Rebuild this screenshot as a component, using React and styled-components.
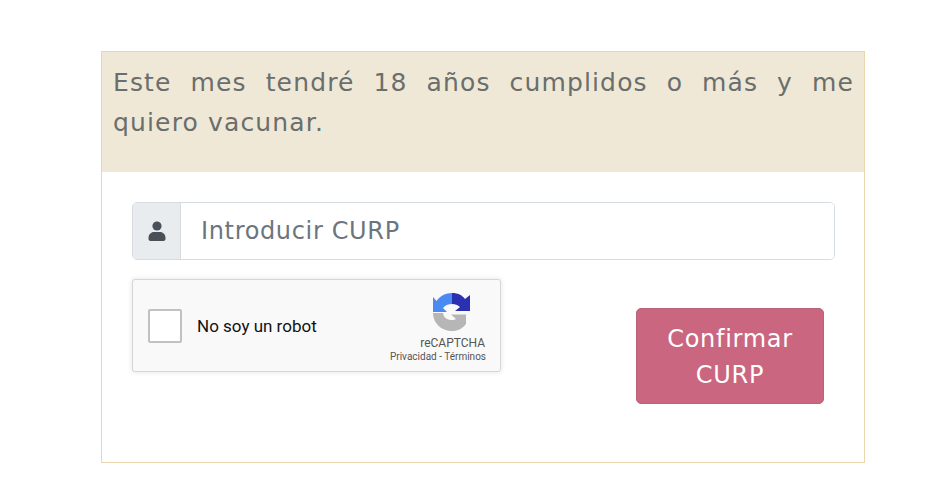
import styled, { createGlobalStyle } from "styled-components";

const GlobalStyle = createGlobalStyle`
  html, body {
    margin: 0;
    background: #fff;
  }
  body {
    font-family: "DejaVu Sans", Inter, sans-serif;
  }
`;

const Page = styled.div`
  padding: 51px 75px 26px 101px;
`;

const Card = styled.div`
  height: 412px;
  box-sizing: border-box;
  border: 1px solid #e8d6ae;
`;

const CardHeader = styled.div`
  height: 120px;
  box-sizing: border-box;
  padding: 11px 10px 0 11px;
  background: #efe8d6;
`;

const Title = styled.p`
  margin: 0;
  font-size: 25px;
  line-height: 40px;
  letter-spacing: 1.15px;
  color: #6a6e6c;
  text-align: justify;
`;

const CardBody = styled.div`
  padding: 30px 29px 0 30px;
`;

const InputGroup = styled.div`
  display: flex;
  height: 58px;
  box-sizing: border-box;
  border: 1px solid #d6dce2;
  border-radius: 5px;
  overflow: hidden;
`;

const InputAddon = styled.span`
  display: flex;
  align-items: center;
  justify-content: center;
  width: 47px;
  background: #e9ecef;
  border-right: 1px solid #d6dce2;
  color: #495057;
`;

const CurpInput = styled.input`
  flex: 1;
  min-width: 0;
  border: 0;
  outline: 0;
  padding: 0 20px;
  font: inherit;
  font-size: 24px;
  letter-spacing: 0.65px;
  color: #495057;

  &::placeholder {
    color: #6c757d;
    opacity: 1;
  }
`;

const ActionRow = styled.div`
  display: flex;
  align-items: flex-start;
  justify-content: space-between;
  margin-top: 19px;
  padding-right: 11px;
`;

const Captcha = styled.div`
  display: flex;
  align-items: center;
  width: 369px;
  height: 93px;
  box-sizing: border-box;
  padding: 0 14px 0 15px;
  background: #f9f9f9;
  border: 1px solid #d6d6d6;
  border-radius: 3px;
  box-shadow: 0 0 4px 1px rgba(0, 0, 0, 0.08);
  font-family: Roboto, "Liberation Sans", sans-serif;
`;

const CheckBox = styled.span`
  width: 34px;
  height: 34px;
  box-sizing: border-box;
  background: #fff;
  border: 2px solid #c1c1c1;
  border-radius: 2px;
`;

const CaptchaLabel = styled.span`
  flex: 1;
  margin-left: 15px;
  font-size: 17px;
  color: #111;
`;

const CaptchaBrand = styled.div`
  display: flex;
  flex-direction: column;
  align-items: flex-end;
  margin-top: 6px;
`;

const LogoSlot = styled.span`
  display: flex;
  margin-right: 15px;
`;

const BrandName = styled.span`
  margin-top: 5px;
  margin-right: 1px;
  font-size: 12px;
  line-height: 14px;
  color: #555;
`;

const BrandLinks = styled.span`
  font-size: 10px;
  line-height: 14px;
  color: #555;
  white-space: nowrap;
`;

const ConfirmButton = styled.button`
  width: 188px;
  height: 96px;
  margin-top: 29px;
  padding: 2px 20px 0;
  background: #ca667f;
  border: 1px solid #b9637a;
  border-radius: 5px;
  font: inherit;
  font-size: 24px;
  line-height: 36px;
  letter-spacing: 0.7px;
  color: #fff;
`;

function UserIcon() {
  return (
    <svg width="18" height="20" viewBox="0 0 18 20" fill="#495057" aria-hidden="true">
      <circle cx="9" cy="5" r="4.6" />
      <path d="M0.5 17 C0.5 13.5 3 11 6 11 H12 C15 11 17.5 13.5 17.5 17 V18 C17.5 19.2 16.6 20 15.5 20 H2.5 C1.4 20 0.5 19.2 0.5 18 Z" />
    </svg>
  );
}

function RecaptchaLogo() {
  return (
    <svg width="38" height="38" viewBox="0 0 38 38" aria-hidden="true">
      <path fill="#4a8af4" d="M19 0 C11 0 6.5 4 3.5 8 L0 4 V19 H14 L10 15 C12 12.5 15 11 19 11 Z" />
      <path fill="#2a30b0" d="M19 0 C25 0 29 2 32 6 L37 2 V18 H22 L27 14 C25 12 22 11 19 11 Z" />
      <path fill="#b6b6b6" d="M0 20 H10 C10.5 24.5 14 27 19 27 C20.5 27 22 26.6 23 26 L18 21.5 H33 V31 C29.5 35.5 25 38 19 38 C8 38 0 30 0 20 Z" />
    </svg>
  );
}

export default function App() {
  return (
    <Page>
      <GlobalStyle />
      <Card>
        <CardHeader>
          <Title>Este mes tendré 18 años cumplidos o más y me quiero vacunar.</Title>
        </CardHeader>
        <CardBody>
          <InputGroup>
            <InputAddon>
              <UserIcon />
            </InputAddon>
            <CurpInput placeholder="Introducir CURP" />
          </InputGroup>
          <ActionRow>
            <Captcha>
              <CheckBox />
              <CaptchaLabel>No soy un robot</CaptchaLabel>
              <CaptchaBrand>
                <LogoSlot>
                  <RecaptchaLogo />
                </LogoSlot>
                <BrandName>reCAPTCHA</BrandName>
                <BrandLinks>Privacidad - Términos</BrandLinks>
              </CaptchaBrand>
            </Captcha>
            <ConfirmButton>Confirmar CURP</ConfirmButton>
          </ActionRow>
        </CardBody>
      </Card>
    </Page>
  );
}
